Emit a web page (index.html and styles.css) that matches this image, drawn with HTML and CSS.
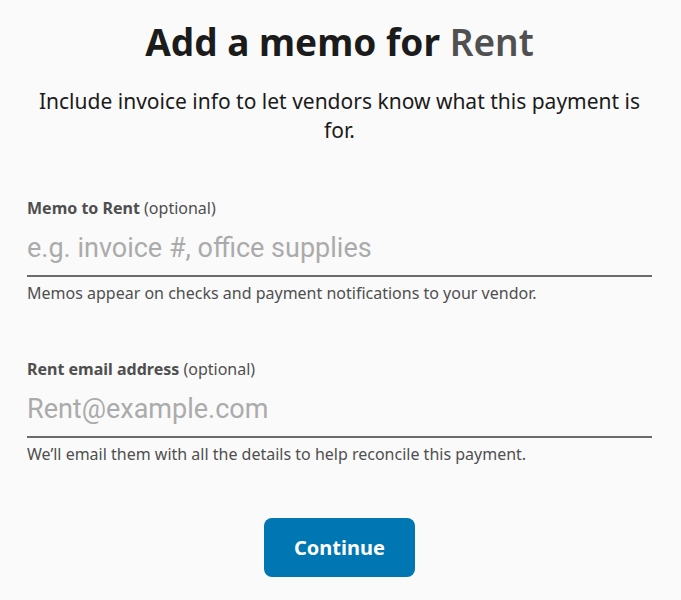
FILE: index.html
```html
<!DOCTYPE html>
<html>
	<head>
		<meta charset="UTF-8">
		<title>Add a memo</title>
		<link rel="stylesheet" href="styles.css">
	</head>
	<body>
		<div class="memo">
			<h1 class="title">Add a memo for <span class="vendor">Rent</span></h1>
			<p class="intro">Include invoice info to let vendors know what this payment is for.</p>

			<div class="field">
				<label class="label" for="memo"><b>Memo to Rent</b> (optional)</label>
				<input class="input" id="memo" type="text" placeholder="e.g. invoice #, office supplies">
				<div class="help">Memos appear on checks and payment notifications to your vendor.</div>
			</div>

			<div class="field">
				<label class="label" for="email"><b>Rent email address</b> (optional)</label>
				<input class="input" id="email" type="text" placeholder="Rent@example.com">
				<div class="help">We’ll email them with all the details to help reconcile this payment.</div>
			</div>

			<div class="actions">
				<button class="btn">Continue</button>
			</div>
		</div>
	</body>
</html>
```
FILE: styles.css
```css
* {
	margin: 0;
	padding: 0;
	box-sizing: border-box;
}
html {
	font-family: "Noto Sans", "Open Sans", sans-serif;
	background: #fafafa;
}
body {
	background: #fafafa;
}
.memo {
	width: 625px;
	padding-top: 19px;
	margin-left: 27px;
}
.title {
	text-align: center;
	font-size: 37px;
	font-weight: 700;
	color: #1b1b1b;
	line-height: 46px;
}
.vendor {
	color: #505050;
	font-weight: 600;
}
.intro {
	margin-top: 22px;
	text-align: center;
	font-size: 21px;
	line-height: 29px;
	color: #1b1b1b;
}
.field {
	margin-top: 53px;
}
.field + .field {
	margin-top: 56px;
}
.label {
	display: block;
	font-size: 16px;
	line-height: 20px;
	color: #4f4f4f;
}
.label b {
	font-weight: 700;
}
.input {
	display: block;
	width: 100%;
	margin-top: 8px;
	height: 51px;
	border: none;
	border-bottom: 2px solid #6b6b6b;
	background: transparent;
	font-family: Roboto, sans-serif;
	font-size: 27px;
	color: #333;
	outline: none;
	padding-bottom: 6px;
}
.input::placeholder {
	color: #ababab;
}
.help {
	margin-top: 6px;
	font-size: 16px;
	line-height: 20px;
	color: #4f4f4f;
}
.actions {
	margin-top: 54px;
	text-align: center;
}
.btn {
	width: 151px;
	height: 59px;
	border: none;
	border-radius: 8px;
	background: #0077b3;
	color: #fff;
	font-family: "Noto Sans", sans-serif;
	font-size: 20px;
	font-weight: 700;
	cursor: pointer;
}
```
